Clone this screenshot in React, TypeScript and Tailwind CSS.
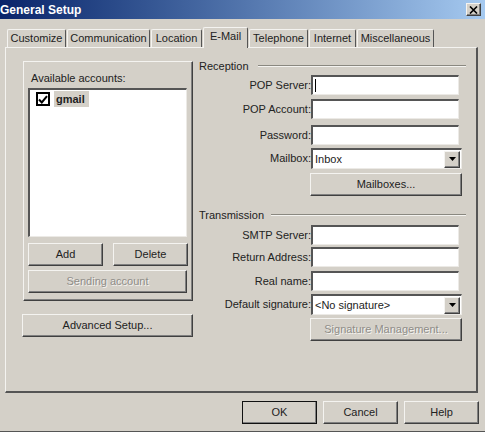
const tabs = [
  { label: 'Customize', width: 'w-[59px]' },
  { label: 'Communication', width: 'w-[83px]' },
  { label: 'Location', width: 'w-[51px]' },
  { label: 'E-Mail', width: 'w-[45px]', active: true },
  { label: 'Telephone', width: 'w-[59px]' },
  { label: 'Internet', width: 'w-[47px]' },
  { label: 'Miscellaneous', width: 'w-[77px]' },
]

const raised =
  'flex items-center justify-center border-t border-l border-t-[#f4f3f0] border-l-[#f4f3f0] border-r border-b border-r-[#404040] border-b-[#404040] shadow-[inset_-1px_-1px_0_#808080]'

function Button({ label, className, disabled }: { label: string; className: string; disabled?: boolean }) {
  return (
    <div className={`${raised} ${className} ${disabled ? 'text-[#8f8d88] [text-shadow:1px_1px_0_#f4f3f0]' : ''}`}>
      {label}
    </div>
  )
}

function Sunken({ className, children }: { className: string; children?: React.ReactNode }) {
  return (
    <div
      className={`bg-white border-t-2 border-l-2 border-t-[#555] border-l-[#555] border-r border-b border-r-[#eceae6] border-b-[#eceae6] ${className}`}
    >
      {children}
    </div>
  )
}

function Row({ label, className, children }: { label: string; className: string; children: React.ReactNode }) {
  return (
    <div className={`flex items-center ${className}`}>
      <div className="w-[112px] text-right whitespace-nowrap">{label}</div>
      {children}
    </div>
  )
}

function TextField({ label, className, caret }: { label: string; className: string; caret?: boolean }) {
  return (
    <Row label={label} className={className}>
      <Sunken className="w-[148px] h-[20px] flex items-center pl-[2px]">
        {caret && <div className="w-px h-[13px] bg-black" />}
      </Sunken>
    </Row>
  )
}

function Combo({ label, value, className }: { label: string; value: string; className: string }) {
  return (
    <Row label={label} className={className}>
      <Sunken className="w-[151px] h-[21px] flex items-center justify-between pl-[2px] pr-px">
        <span>{value}</span>
        <div className={`${raised} w-[16px] h-[17px] bg-[#d4d0c8]`}>
          <svg width="7" height="4" viewBox="0 0 7 4">
            <path d="M0 0h7L3.5 4z" fill="#000" />
          </svg>
        </div>
      </Sunken>
    </Row>
  )
}

function Section({ label, lineWidth, className }: { label: string; lineWidth: string; className: string }) {
  return (
    <div className={`flex items-center justify-between h-[14px] ${className}`}>
      <span>{label}</span>
      <div className={`${lineWidth} h-[2px] border-t border-t-[#8a8880] border-b border-b-[#f4f3f0]`} />
    </div>
  )
}

export default function App() {
  return (
    <div className="w-[485px] h-[432px] overflow-hidden flex flex-col bg-[#d4d0c8] text-[11px] leading-none text-[#222] font-['Liberation_Sans',Arial,sans-serif] border-b border-b-[#555]">
      <div className="h-[19px] shrink-0 flex items-center justify-between pr-[4px] bg-gradient-to-r from-[#0a246a] to-[#a6caf0]">
        <span className="text-white font-bold text-[12px]">General Setup</span>
        <div className={`${raised} w-[15px] h-[13px] bg-[#d4d0c8]`}>
          <svg width="9" height="8" viewBox="0 0 9 8">
            <path d="M1 0.5 8 7.5M8 0.5 1 7.5" stroke="#000" strokeWidth="1.6" fill="none" />
          </svg>
        </div>
      </div>

      <div className="flex items-end h-[28px] shrink-0 pl-[7px] gap-[1px] relative z-10">
        {tabs.map((t) => (
          <div
            key={t.label}
            className={`flex items-center justify-center rounded-t-[2px] border-t border-l border-t-[#f4f3f0] border-l-[#f4f3f0] border-r border-r-[#555] bg-[#d4d0c8] whitespace-nowrap ${t.width} ${
              t.active ? 'h-[21px] -mb-px pb-[3px]' : 'h-[18px]'
            }`}
          >
            {t.label}
          </div>
        ))}
      </div>

      <div className="ml-[5px] w-[473px] h-[346px] shrink-0 flex border-t border-l border-t-[#f4f3f0] border-l-[#f4f3f0] border-r-2 border-r-[#555] border-b-2 border-b-[#555]">
        <div className="w-[192px] pl-[17px] pt-[13px] shrink-0 flex flex-col">
          <div className={`${raised} !block w-[170px] h-[240px] px-[4px]`}>
            <div className="pl-[3px] h-[26px] flex items-center pt-[6px]">Available accounts:</div>
            <Sunken className="w-[159px] h-[149px] pl-[6px] pt-[1px]">
              <div className="flex items-center gap-[4px] h-[16px]">
                <div className="w-[14px] h-[14px] border-2 border-black flex items-center justify-center bg-white">
                  <svg width="10" height="9" viewBox="0 0 10 9">
                    <path d="M1 4.5 3.8 7.5 9 1.2" stroke="#000" strokeWidth="2" fill="none" />
                  </svg>
                </div>
                <span className="bg-[#d4d0c8] font-bold h-[16px] w-[35px] flex items-center pl-[2px]">gmail</span>
              </div>
            </Sunken>
            <div className="flex gap-[10px] mt-[6px]">
              <Button label="Add" className="w-[75px] h-[23px]" />
              <Button label="Delete" className="w-[75px] h-[23px]" />
            </div>
            <Button label="Sending account" className="w-[159px] h-[23px] mt-[4px]" disabled />
          </div>
          <Button label="Advanced Setup..." className="w-[171px] h-[23px] mt-[13px] -ml-px" />
        </div>

        <div className="w-[267px] ml-[1px] shrink-0 pt-[11px] flex flex-col">
          <Section label="Reception" lineWidth="w-[208px]" className="" />
          <TextField label="POP Server:" className="mt-[2px]" caret />
          <TextField label="POP Account:" className="mt-[4px]" />
          <TextField label="Password:" className="mt-[6px]" />
          <Combo label="Mailbox:" value="Inbox" className="mt-[3px]" />
          <div className="flex justify-end pr-[4px]">
            <Button label="Mailboxes..." className="w-[152px] h-[23px] mt-[4px]" />
          </div>
          <Section label="Transmission" lineWidth="w-[195px]" className="mt-[12px]" />
          <TextField label="SMTP Server:" className="mt-[3px]" />
          <TextField label="Return Address:" className="mt-[2px]" />
          <TextField label="Real name:" className="mt-[4px]" />
          <Combo label="Default signature:" value="<No signature>" className="mt-[3px]" />
          <div className="flex justify-end pr-[4px]">
            <Button label="Signature Management..." className="w-[152px] h-[23px] mt-[3px]" disabled />
          </div>
        </div>
      </div>

      <div className="flex justify-end gap-[6px] pr-[6px] mt-[8px]">
        <Button label="OK" className="w-[75px] h-[23px] !border-[#111]" />
        <Button label="Cancel" className="w-[75px] h-[23px]" />
        <Button label="Help" className="w-[75px] h-[23px]" />
      </div>
    </div>
  )
}
